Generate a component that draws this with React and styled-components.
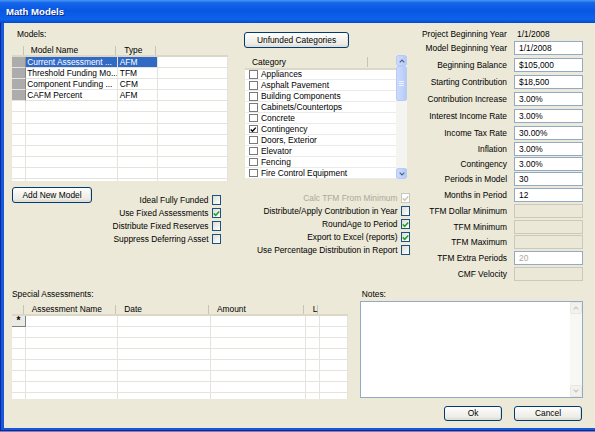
import React from 'react';
import styled, { createGlobalStyle } from 'styled-components';

const FONT = `"Liberation Sans", Arial, sans-serif`;

const GlobalStyle = createGlobalStyle`
  *, *::before, *::after { box-sizing: border-box; }
  html, body { margin: 0; padding: 0; background: #8a7bb0; }
  body { font-family: ${FONT}; font-size: 8.4px; color: #000; }
  #root { width: 595px; height: 432px; overflow: hidden; }
`;

const Window = styled.div`
  width: 604px;
  height: 431px;
  display: flex;
  flex-direction: column;
`;

const TitleBar = styled.div`
  height: 23px;
  flex-shrink: 0;
  display: flex;
  align-items: center;
  padding-left: 6px;
  background: linear-gradient(180deg, #4a98f7 0%, #1565ea 12%, #0857e4 45%, #0d62ea 85%, #044ac9 100%);
  color: #fff;
  font-weight: bold;
  font-size: 9.6px;
  text-shadow: 1px 1px 0 #0a2a8a;
`;

const Frame = styled.div`
  flex: 1;
  display: flex;
  background: #1558dc;
  border-left: 1px solid #0a2a9c;
  border-bottom: 1px solid #0a2a9c;
  padding: 0 0 2px 3px;
`;

const Client = styled.div`
  flex: 1;
  background: #ece9d8;
  padding: 6px 0 0 8px;
  display: flex;
  flex-direction: column;
`;

const TopSection = styled.div`
  display: flex;
  height: 259.5px;
  flex-shrink: 0;
`;

const Column = styled.div`
  width: ${p => p.$w}px;
  margin-left: ${p => p.$ml || 0}px;
  display: flex;
  flex-direction: column;
  flex-shrink: 0;
`;

const Caption = styled.div`
  height: 11px;
  line-height: 11px;
  margin-left: ${p => p.$ml || 0}px;
  white-space: nowrap;
`;

/* ---------- data grid ---------- */
const GridWrap = styled.div`
  width: ${p => p.$w}px;
  margin-top: ${p => p.$mt || 0}px;
  display: flex;
  flex-direction: column;
`;

const GridHead = styled.div`
  display: grid;
  grid-template-columns: ${p => p.$cols};
  height: ${p => p.$h}px;
  background: #ece9d8;
  box-shadow: inset 0 -2px 0 #dcd8c7;
`;

const HeadCell = styled.div`
  padding-left: ${p => p.$pl || 0}px;
  line-height: ${p => p.$h}px;
  white-space: nowrap;
  overflow: hidden;
  background: ${p => p.$sep
    ? 'linear-gradient(#c7c5b2, #c7c5b2) right 2px center / 1px calc(100% - 5px) no-repeat'
    : 'none'};
`;

const GridBody = styled.div`
  height: ${p => p.$h}px;
  overflow: hidden;
  background: #fff;
  display: flex;
  flex-direction: column;
`;

const GridRow = styled.div`
  display: grid;
  grid-template-columns: ${p => p.$cols};
  height: ${p => p.$h}px;
  flex-shrink: 0;
`;

const Cell = styled.div`
  border-right: 1px solid #e4e3dd;
  border-bottom: 1px solid #e4e3dd;
  padding-left: 1.5px;
  white-space: nowrap;
  overflow: hidden;
  display: flex;
  align-items: center;
  background: ${p => (p.$selected ? '#316ac5' : '#fff')};
  color: ${p => (p.$selected ? '#fff' : '#000')};
`;

const RowHeadCell = styled.div`
  border-bottom: 1px solid #e4e3dd;
  border-right: 1px solid ${p => (p.$filled ? '#8a8a8a' : '#e4e3dd')};
  background: ${p => (p.$filled ? '#acacac' : '#fff')};
`;

const NewRowHead = styled.div`
  background: #ebeae4;
  border-right: 1px solid #808080;
  border-bottom: 1px solid #808080;
  display: flex;
  align-items: center;
  justify-content: center;
  font-size: 10px;
  font-weight: bold;
  line-height: 1;
`;

/* ---------- buttons ---------- */
const XpButton = styled.button`
  width: ${p => p.$w}px;
  height: ${p => p.$h || 16}px;
  margin: ${p => p.$m || '0'};
  padding: 0;
  flex-shrink: 0;
  font-family: ${FONT};
  font-size: 8.4px;
  color: #000;
  border: 1px solid #003c74;
  border-radius: 3px;
  background: linear-gradient(180deg, #ffffff 0%, #f5f4ef 40%, #ecebe6 80%, #d6d0c5 100%);
  box-shadow: inset -1px -1px 0 #e3e0d6;
`;

/* ---------- checkboxes ---------- */
const CheckStack = styled.div`
  display: flex;
  flex-direction: column;
  align-items: flex-end;
  margin: ${p => p.$m};
`;

const CheckRow = styled.div`
  display: flex;
  align-items: center;
  gap: 3px;
  height: 13px;
  white-space: nowrap;
  color: ${p => (p.$disabled ? '#aca899' : '#000')};
`;

const XpBox = styled.span`
  width: 9.5px;
  height: 9.5px;
  display: inline-flex;
  align-items: center;
  justify-content: center;
  border: 1px solid ${p => (p.$disabled ? '#cac8bb' : '#1c5180')};
  background: ${p => (p.$disabled ? '#fff' : 'linear-gradient(135deg, #dcdcd7, #ffffff)')};
`;

const Tick = ({ color }) => (
  <svg width="7" height="7" viewBox="0 0 7 7">
    <path d="M0.8 3.4 L2.7 5.3 L6.2 1.5" fill="none" stroke={color} strokeWidth="1.5" />
  </svg>
);

const XpCheck = ({ label, checked, disabled }) => (
  <CheckRow $disabled={disabled}>
    <span>{label}</span>
    <XpBox $disabled={disabled}>
      {checked && <Tick color={disabled ? '#cac8bb' : '#21a121'} />}
    </XpBox>
  </CheckRow>
);

/* ---------- category list ---------- */
const ListBox = styled.div`
  width: 162px;
  height: 124px;
  margin: 7px 0 0 3px;
  display: flex;
`;

const ListMain = styled.div`
  flex: 1;
  display: flex;
  flex-direction: column;
`;

const ListHead = styled.div`
  height: 14.5px;
  display: flex;
  background: #ece9d8;
  box-shadow: inset 0 -2px 0 #dcd8c7;
`;

const ListHeadCell = styled.div`
  width: ${p => p.$w ? `${p.$w}px` : 'auto'};
  flex: ${p => (p.$w ? 'none' : 1)};
  padding-left: 7px;
  line-height: 14px;
  background: ${p => p.$sep
    ? 'linear-gradient(#c7c5b2, #c7c5b2) right 0 center / 1px calc(100% - 5px) no-repeat'
    : 'none'};
`;

const ListBody = styled.div`
  flex: 1;
  background: #fff;
  overflow: hidden;
`;

const ListItem = styled.div`
  height: 10.95px;
  display: flex;
  align-items: center;
  gap: 3.5px;
  padding-left: 4px;
  border-bottom: 1px solid #ebebeb;
  white-space: nowrap;
`;

const ListCheckBox = styled.span`
  width: 8.5px;
  height: 8.5px;
  display: inline-flex;
  align-items: center;
  justify-content: center;
  border: 1px solid #7a7a7a;
  background: #fff;
  flex-shrink: 0;
`;

/* ---------- scrollbars ---------- */
const ScrollBar = styled.div`
  width: ${p => p.$w}px;
  display: flex;
  flex-direction: column;
  background: ${p => (p.$disabled ? '#f7f7f3' : '#f4f4f0')};
  flex-shrink: 0;
`;

const ScrollBtn = styled.div`
  height: ${p => p.$h}px;
  display: flex;
  align-items: center;
  justify-content: center;
  flex-shrink: 0;
  border-radius: 2px;
  border: 1px solid ${p => (p.$disabled ? '#e8e8e3' : '#b7cbf5')};
  background: ${p => (p.$disabled
    ? '#f2f1ec'
    : 'linear-gradient(90deg, #cbdafd 0%, #c2d4fc 50%, #b4c9f6 100%)')};
`;

const ScrollTrack = styled.div`
  flex: 1;
`;

const Chevron = ({ up, color }) => (
  <svg width="6" height="4" viewBox="0 0 6 4">
    <path d={up ? 'M0.7 3.3 L3 1 L5.3 3.3' : 'M0.7 0.7 L3 3 L5.3 0.7'} fill="none" stroke={color} strokeWidth="1.2" />
  </svg>
);

const Grip = () => (
  <svg width="5" height="5" viewBox="0 0 5 5">
    <path d="M0 0.5 H5 M0 2.5 H5 M0 4.5 H5" stroke="#eef3fe" strokeWidth="1" />
  </svg>
);

/* ---------- right fields ---------- */
const FieldRow = styled.div`
  display: grid;
  grid-template-columns: 85px 69px;
  column-gap: 7px;
  height: ${p => p.$h}px;
  align-items: start;
  flex-shrink: 0;
`;

const FieldLabel = styled.div`
  height: 14px;
  line-height: 15px;
  text-align: right;
  white-space: nowrap;
`;

const StaticLabel = styled.div`
  line-height: 10px;
  white-space: nowrap;
`;

const StaticValue = styled.div`
  line-height: 10px;
  padding-left: 3px;
`;

const Field = styled.div`
  height: 14px;
  line-height: 12px;
  padding-left: 4px;
  white-space: nowrap;
  border: 1px solid ${p => (p.$disabled ? '#cbc9bd' : '#93a9c4')};
  background: ${p => (p.$disabled ? '#ebe8d7' : '#fff')};
  color: ${p => (p.$gray ? '#aca899' : '#000')};
`;

/* ---------- bottom ---------- */
const BottomSection = styled.div`
  display: flex;
  flex: 1;
`;

const NotesBox = styled.div`
  height: 97.6px;
  margin-top: 1.2px;
  display: flex;
  border: 1px solid #93a9c4;
  background: #fff;
`;

const NotesText = styled.div`
  flex: 1;
`;

const ButtonRow = styled.div`
  display: flex;
  justify-content: flex-end;
  gap: 12px;
  margin: 7.4px 1px 0 0;
`;

const BottomLeftInner = styled.div`
  display: flex;
  align-items: flex-start;
  margin-top: 6px;
`;

/* ---------- data ---------- */
const modelCols = '13.7px 92.6px 39.4px 1fr';
const models = [
  ['Current Assessment ...', 'AFM'],
  ['Threshold Funding Mo...', 'TFM'],
  ['Component Funding ...', 'CFM'],
  ['CAFM Percent', 'AFM'],
];

const assessCols = '13.7px 92.6px 92.7px 94.7px 14.6px 1fr';

const categories = [
  'Appliances', 'Asphalt Pavement', 'Building Components', 'Cabinets/Countertops',
  'Concrete', 'Contingency', 'Doors, Exterior', 'Elevator', 'Fencing', 'Fire Control Equipment',
];

const fields = [
  { label: 'Model Beginning Year', value: '1/1/2008', h: 17 },
  { label: 'Beginning Balance', value: '$105,000', h: 17.5 },
  { label: 'Starting Contribution', value: '$18,500', h: 17 },
  { label: 'Contribution Increase', value: '3.00%', h: 17 },
  { label: 'Interest Income Rate', value: '3.00%', h: 16.5 },
  { label: 'Income Tax Rate', value: '30.00%', h: 16 },
  { label: 'Inflation', value: '3.00%', h: 15.5 },
  { label: 'Contingency', value: '3.00%', h: 15 },
  { label: 'Periods in Model', value: '30', h: 15.5 },
  { label: 'Months in Period', value: '12', h: 16.5 },
  { label: 'TFM Dollar Minimum', value: '', h: 15.5, disabled: true },
  { label: 'TFM Minimum', value: '', h: 15.5, disabled: true },
  { label: 'TFM Maximum', value: '', h: 16, disabled: true },
  { label: 'TFM Extra Periods', value: '20', h: 15.5, gray: true },
  { label: 'CMF Velocity', value: '', h: 15, disabled: true },
];

export default function App() {
  return (
    <>
      <GlobalStyle />
      <Window>
        <TitleBar>Math Models</TitleBar>
        <Frame>
          <Client>
            <TopSection>
              {/* left column */}
              <Column $w={216}>
                <Caption $ml={5}>Models:</Caption>
                <GridWrap $w={216} $mt={3}>
                  <GridHead $cols={modelCols} $h={14}>
                    <HeadCell $h={14} $sep />
                    <HeadCell $h={14} $pl={5} $sep>Model Name</HeadCell>
                    <HeadCell $h={14} $pl={6} $sep>Type</HeadCell>
                    <HeadCell $h={14} />
                  </GridHead>
                  <GridBody $h={124}>
                    {Array.from({ length: 12 }).map((_, i) => {
                      const m = models[i];
                      return (
                        <GridRow key={i} $cols={modelCols} $h={11.1}>
                          <RowHeadCell $filled={!!m} />
                          <Cell $selected={i === 0}>{m ? m[0] : ''}</Cell>
                          <Cell $selected={i === 0}>{m ? m[1] : ''}</Cell>
                          <Cell />
                        </GridRow>
                      );
                    })}
                  </GridBody>
                </GridWrap>
                <BottomLeftInner>
                  <XpButton $w={80} $h={15.5}>Add New Model</XpButton>
                  <CheckStack $m="6.5px 7px 0 auto">
                    <XpCheck label="Ideal Fully Funded" />
                    <XpCheck label="Use Fixed Assessments" checked />
                    <XpCheck label="Distribute Fixed Reserves" />
                    <XpCheck label="Suppress Deferring Asset" />
                  </CheckStack>
                </BottomLeftInner>
              </Column>

              {/* middle column */}
              <Column $w={168} $ml={14}>
                <XpButton $w={105} $m="3px 0 0 2px">Unfunded Categories</XpButton>
                <ListBox>
                  <ListMain>
                    <ListHead>
                      <ListHeadCell $w={123} $sep>Category</ListHeadCell>
                      <ListHeadCell />
                    </ListHead>
                    <ListBody>
                      {categories.map(c => (
                        <ListItem key={c}>
                          <ListCheckBox>{c === 'Contingency' && <Tick color="#000" />}</ListCheckBox>
                          <span>{c}</span>
                        </ListItem>
                      ))}
                    </ListBody>
                  </ListMain>
                  <ScrollBar $w={11}>
                    <ScrollBtn $h={11}><Chevron up color="#4d6185" /></ScrollBtn>
                    <ScrollBtn $h={35}><Grip /></ScrollBtn>
                    <ScrollTrack />
                    <ScrollBtn $h={11}><Chevron color="#4d6185" /></ScrollBtn>
                  </ScrollBar>
                </ListBox>
                <CheckStack $m="12.5px 0 0 0">
                  <XpCheck label="Calc TFM From Minimum" checked disabled />
                  <XpCheck label="Distribute/Apply Contribution in Year" />
                  <XpCheck label="RoundAge to Period" checked />
                  <XpCheck label="Export to Excel (reports)" checked />
                  <XpCheck label="Use Percentage Distribution in Report" />
                </CheckStack>
              </Column>

              {/* right column */}
              <Column $w={161} $ml={12}>
                <FieldRow $h={11.7}>
                  <StaticLabel>Project Beginning Year</StaticLabel>
                  <StaticValue>1/1/2008</StaticValue>
                </FieldRow>
                {fields.map(f => (
                  <FieldRow key={f.label} $h={f.h}>
                    <FieldLabel>{f.label}</FieldLabel>
                    <Field $disabled={f.disabled} $gray={f.gray}>{f.value}</Field>
                  </FieldRow>
                ))}
              </Column>
            </TopSection>

            <BottomSection>
              <Column $w={336}>
                <Caption>Special Assessments:</Caption>
                <GridWrap $w={336} $mt={2.5}>
                  <GridHead $cols={assessCols} $h={14}>
                    <HeadCell $h={14} $sep />
                    <HeadCell $h={14} $pl={6} $sep>Assessment Name</HeadCell>
                    <HeadCell $h={14} $pl={6} $sep>Date</HeadCell>
                    <HeadCell $h={14} $pl={6} $sep>Amount</HeadCell>
                    <HeadCell $h={14} $pl={7} $sep>L</HeadCell>
                    <HeadCell $h={14} />
                  </GridHead>
                  <GridBody $h={82.5}>
                    {Array.from({ length: 8 }).map((_, i) => (
                      <GridRow key={i} $cols={assessCols} $h={10.95}>
                        {i === 0 ? <NewRowHead>*</NewRowHead> : <RowHeadCell />}
                        <Cell />
                        <Cell />
                        <Cell />
                        <Cell />
                        <Cell />
                      </GridRow>
                    ))}
                  </GridBody>
                </GridWrap>
              </Column>
              <Column $w={223} $ml={12}>
                <Caption $ml={1.7}>Notes:</Caption>
                <NotesBox>
                  <NotesText />
                  <ScrollBar $w={12} $disabled>
                    <ScrollBtn $h={12} $disabled><Chevron up color="#c4c4bd" /></ScrollBtn>
                    <ScrollTrack />
                    <ScrollBtn $h={12} $disabled><Chevron color="#c4c4bd" /></ScrollBtn>
                  </ScrollBar>
                </NotesBox>
                <ButtonRow>
                  <XpButton $w={58} $h={15.5}>Ok</XpButton>
                  <XpButton $w={68} $h={15.5}>Cancel</XpButton>
                </ButtonRow>
              </Column>
            </BottomSection>
          </Client>
        </Frame>
      </Window>
    </>
  );
}
